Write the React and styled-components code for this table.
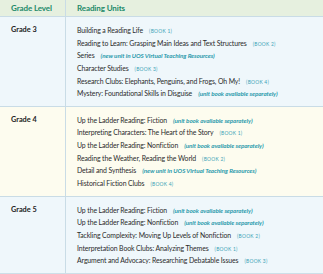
import React from "react";
import styled, { createGlobalStyle } from "styled-components";

const Global = createGlobalStyle`
  html, body { margin: 0; padding: 0; background: #ffffff; }
  body { font-family: Lato, "Liberation Sans", sans-serif; }
`;

const Table = styled.div`
  width: 323px;
  display: grid;
  grid-template-columns: 66px 1fr;
  border-bottom: 1px solid #cddfe8;
`;

const HeadCell = styled.div`
  background: #e6f0df;
  height: 16px;
  display: flex;
  align-items: center;
  padding-left: ${(p) => (p.$first ? "11px" : "11px")};
  border-right: ${(p) => (p.$first ? "1px solid #c9dce6" : "none")};
  border-bottom: 1px solid #c9dce6;
  color: #238a6a;
  font-weight: 700;
  font-size: 8px;
  letter-spacing: -0.1px;
  box-sizing: border-box;
  height: 17px;
`;

const GradeCell = styled.div`
  background: ${(p) => p.$bg};
  border-right: 1px solid #c9dce6;
  border-bottom: ${(p) => (p.$last ? "none" : "1px solid #c9dce6")};
  padding: 7px 0 6px 11px;
  font-weight: 700;
  font-size: 7.3px;
  color: #222;
  line-height: 12.65px;
`;

const UnitsCell = styled.div`
  background: ${(p) => p.$bg};
  border-bottom: ${(p) => (p.$last ? "none" : "1px solid #c9dce6")};
  padding: 7px 0 6px 11px;
  display: flex;
  flex-direction: column;
`;

const Unit = styled.div`
  height: 12.65px;
  line-height: 12.65px;
  font-size: 6.9px;
  color: #2b2b2b;
  white-space: nowrap;
  letter-spacing: -0.1px;
`;

const Book = styled.span`
  margin-left: 6px;
  font-size: 4.9px;
  color: #3aa2b6;
  letter-spacing: 0.25px;
`;

const Note = styled.span`
  margin-left: 6px;
  font-size: 6.2px;
  font-style: italic;
  font-weight: 700;
  color: #2899ab;
  letter-spacing: -0.05px;
`;

const grades = [
  {
    name: "Grade 3",
    bg: "#eff7fb",
    units: [
      ["Building a Reading Life", "book", "BOOK 1"],
      ["Reading to Learn: Grasping Main Ideas and Text Structures", "book", "BOOK 2"],
      ["Series", "note", "new unit in UOS Virtual Teaching Resources"],
      ["Character Studies", "book", "BOOK 3"],
      ["Research Clubs: Elephants, Penguins, and Frogs, Oh My!", "book", "BOOK 4"],
      ["Mystery: Foundational Skills in Disguise", "note", "unit book available separately"],
    ],
  },
  {
    name: "Grade 4",
    bg: "#fdfcef",
    units: [
      ["Up the Ladder Reading: Fiction", "note", "unit book available separately"],
      ["Interpreting Characters: The Heart of the Story", "book", "BOOK 1"],
      ["Up the Ladder Reading: Nonfiction", "note", "unit book available separately"],
      ["Reading the Weather, Reading the World", "book", "BOOK 2"],
      ["Detail and Synthesis", "note", "new unit in UOS Virtual Teaching Resources"],
      ["Historical Fiction Clubs", "book", "BOOK 4"],
    ],
  },
  {
    name: "Grade 5",
    bg: "#eff7fb",
    units: [
      ["Up the Ladder Reading: Fiction", "note", "unit book available separately"],
      ["Up the Ladder Reading: Nonfiction", "note", "unit book available separately"],
      ["Tackling Complexity: Moving Up Levels of Nonfiction", "book", "BOOK 2"],
      ["Interpretation Book Clubs: Analyzing Themes", "book", "BOOK 1"],
      ["Argument and Advocacy: Researching Debatable Issues", "book", "BOOK 3"],
    ],
  },
];

export default function App() {
  return (
    <>
      <Global />
      <Table>
        <HeadCell $first>Grade Level</HeadCell>
        <HeadCell>Reading Units</HeadCell>
        {grades.map((g, gi) => {
          const last = gi === grades.length - 1;
          return (
            <React.Fragment key={g.name}>
              <GradeCell $bg={g.bg} $last={last}>{g.name}</GradeCell>
              <UnitsCell $bg={g.bg} $last={last}>
                {g.units.map(([title, kind, extra]) => (
                  <Unit key={title}>
                    {title}
                    {kind === "book" ? <Book>({extra})</Book> : <Note>({extra})</Note>}
                  </Unit>
                ))}
              </UnitsCell>
            </React.Fragment>
          );
        })}
      </Table>
    </>
  );
}
